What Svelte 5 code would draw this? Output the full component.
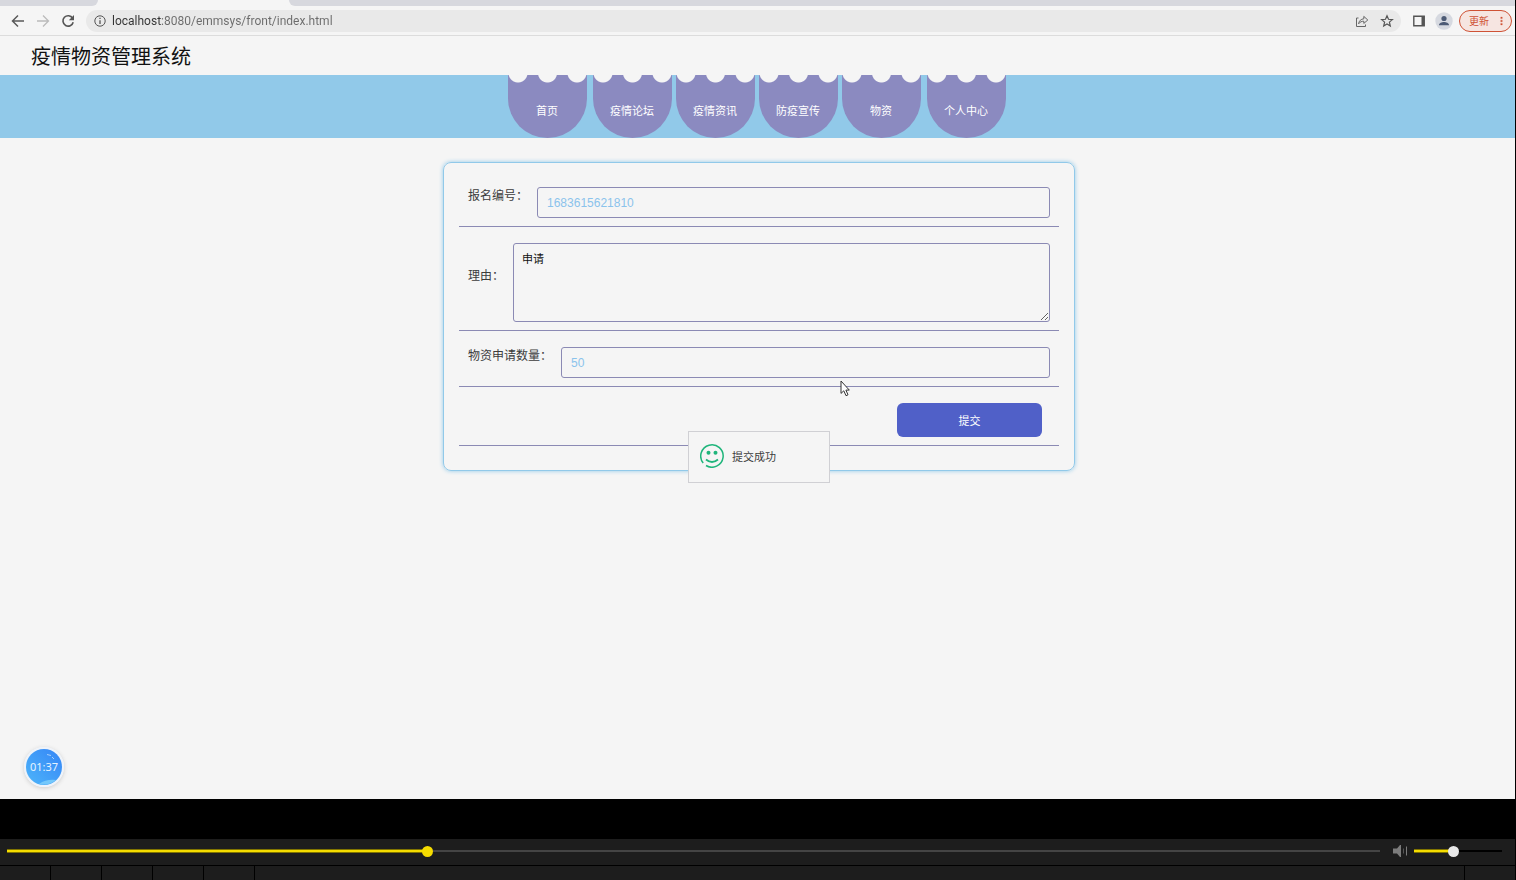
<!-- App.svelte -->
<script>
    const navItems = ['首页', '疫情论坛', '疫情资讯', '防疫宣传', '物资', '个人中心'];
    const cells = [1, 2, 3, 4, 5];

    let url = $state('localhost:8080/emmsys/front/index.html');
    let applyNo = $state('1683615621810');
    let reason = $state('申请');
    let amount = $state('50');
    let submitted = $state(true);
    let progress = $state(305);
    let volume = $state(44);

    function submit(e) {
        e.preventDefault();
        submitted = true;
    }
</script>

<div class="screen">
    <div class="tabs"><div class="tab"></div><div class="tab active"></div><div class="tab rest"></div></div>
    <div class="toolbar">
        <div class="history">
            <button aria-label="后退">
                <svg width="14" height="14" viewBox="0 0 14 14"><path d="M13 7H2M7 1.5L1.5 7L7 12.5" fill="none" stroke="#5a5a5a" stroke-width="1.5" /></svg>
            </button>
            <button aria-label="前进">
                <svg width="14" height="14" viewBox="0 0 14 14"><path d="M1 7h11M7 1.5L12.5 7L7 12.5" fill="none" stroke="#bbb" stroke-width="1.3" /></svg>
            </button>
            <button aria-label="刷新">
                <svg width="14" height="14" viewBox="0 0 14 14"><path d="M11.6 4.2A5.2 5.2 0 1 0 12.2 8.2" fill="none" stroke="#555" stroke-width="1.6" /><path d="M13 1v5.2H7.8z" fill="#555" /></svg>
            </button>
        </div>
        <div class="address">
            <svg width="12" height="12" viewBox="0 0 12 12"><circle cx="6" cy="6" r="5.2" fill="none" stroke="#555" /><path d="M6 5.2V9M6 2.8V4.1" stroke="#555" stroke-width="1.3" /></svg>
            <input type="text" aria-label="地址" bind:value={url} />
            <button aria-label="分享">
                <svg width="14" height="14" viewBox="0 0 14 14"><path d="M3.5 4H1.5V12.5H10.5V10.5M3.6 9.8C4 6.8 6 5 8.8 4.8V2.4L12.8 6L8.8 9.4V7.2C6.6 7.2 5 8 3.6 9.8Z" fill="none" stroke="#666" stroke-linejoin="round" /></svg>
            </button>
            <button aria-label="收藏">
                <svg width="14" height="14" viewBox="0 0 14 14"><path d="M7 1.7L8.5 5.3L12.4 5.6L9.4 8.1L10.3 11.9L7 9.9L3.7 11.9L4.6 8.1L1.6 5.6L5.5 5.3Z" fill="none" stroke="#555" stroke-width="1.2" /></svg>
            </button>
        </div>
        <button class="panel" aria-label="侧边栏">
            <svg width="12" height="12" viewBox="0 0 12 12"><path d="M.8 1.2h10.4v9.6H.8z" fill="none" stroke="#555" stroke-width="1.4" /><path d="M8.5 1h3v10h-3z" fill="#555" /></svg>
        </button>
        <button class="profile" aria-label="用户">
            <svg width="18" height="18" viewBox="0 0 18 18"><circle cx="9" cy="9" r="8.7" fill="#d6d9e0" /><circle cx="9" cy="6.5" r="2.6" fill="#4d5b75" /><path d="M4 13.2C4 10.8 6.8 10 9 10S14 10.8 14 13.2z" fill="#4d5b75" /></svg>
        </button>
        <button class="update">
            更新
            <svg width="4" height="12" viewBox="0 0 4 12"><path d="M1 .8h2v2H1zM1 5h2v2H1zM1 9.2h2v2H1z" fill="#cf5235" stroke="#cf5235" stroke-width=".4" /></svg>
        </button>
    </div>

    <header>
        <h1>疫情物资管理系统</h1>
    </header>
    <nav>
        {#each navItems as item}
            <a href="#top">{item}</a>
        {/each}
    </nav>

    <main>
        <form onsubmit={submit}>
            <div class="row">
                <label for="applyNo">报名编号：</label>
                <input id="applyNo" type="text" bind:value={applyNo} />
            </div>
            <div class="row">
                <label for="reason">理由：</label>
                <textarea id="reason" bind:value={reason}></textarea>
            </div>
            <div class="row">
                <label for="amount">物资申请数量：</label>
                <input id="amount" type="text" bind:value={amount} />
            </div>
            <div class="row actions">
                <button class="submit" type="submit">提交</button>
            </div>

            {#if submitted}
                <div class="toast" role="status">
                    <svg width="24" height="24" viewBox="0 0 24 24">
                        <path d="M3.2 19A11.2 11.2 0 1 1 6 21.5" fill="none" stroke="#1fb57b" stroke-width="1.5" />
                        <circle cx="8.5" cy="8.8" r="2" fill="#1fb57b" />
                        <circle cx="15.5" cy="8.8" r="2" fill="#1fb57b" />
                        <path d="M6 15.5Q12 20.5 18 15.5" fill="none" stroke="#1fb57b" stroke-width="1.8" />
                    </svg>
                    提交成功
                </div>
            {/if}
            <svg class="cursor" width="10" height="17" viewBox="0 0 10 17"><path d="M1 1V13.4L3.8 10.8L6 15.7L8 14.8L5.9 10.1H9.3Z" fill="#fff" stroke="#333" /></svg>
        </form>
        <div class="timer">
            <svg width="36" height="36" viewBox="0 0 36 36">
                <defs>
                    <linearGradient id="ball" x1="0" y1="1" x2="1" y2="0">
                        <stop offset="0" stop-color="#4db5fa" />
                        <stop offset="1" stop-color="#3585f6" />
                    </linearGradient>
                </defs>
                <circle cx="18" cy="18" r="18" fill="url(#ball)" />
                <path d="M13 35Q20 30 30 31Q23 37 13 35Z" fill="#74c8fb" />
                <path d="M21 5.5L25 6.5M26 8L28 10" stroke="#a6cffb" stroke-width="1" />
            </svg>
            <span>01:37</span>
        </div>
    </main>

    <div class="letterbox"></div>
    <div class="controls">
        <input class="seek" type="range" min="0" max="1000" aria-label="进度" bind:value={progress} style="--fill: {progress / 10}%" />
        <button aria-label="静音">
            <svg width="16" height="14" viewBox="0 0 16 14"><path d="M1 4.5H5L8 1H9V13H8L5 9.5H1Z" fill="#7c7c7c" /><path d="M11.5 4.5V9.5" stroke="#555" /><path d="M14.5 2.5V11.5" stroke="#7c7c7c" /></svg>
        </button>
        <input class="volume" type="range" min="0" max="100" aria-label="音量" bind:value={volume} style="--fill: {volume}%" />
    </div>
    <div class="strip">
        {#each cells as cell}
            <div class="cell"></div>
        {/each}
        <div class="cell last"></div>
    </div>
</div>

<style>
    :global(body) {
        margin: 0;
        background: #000;
    }

    .screen {
        display: flex;
        flex-direction: column;
        box-sizing: border-box;
        min-height: 100vh;
        border-right: 1px solid #000;
        background: #f5f5f5;
        color: #3c3c3c;
        font-family: "Liberation Sans", "Noto Sans CJK SC", sans-serif;
        font-size: 12px;
    }

    button {
        padding: 0;
        border: 0;
        background: none;
        font-family: inherit;
    }

    svg {
        display: block;
    }

    /* browser chrome */
    .tabs {
        display: flex;
        height: 6px;
        background: #f5f5f5;
    }

    .tab {
        width: 98px;
        background: #d7d8de;
        border-bottom-right-radius: 6px;
    }

    .tab.active {
        width: 191px;
        background: #f5f5f5;
    }

    .tab.rest {
        flex: 1;
        border-radius: 0 0 0 6px;
    }

    .toolbar {
        display: flex;
        align-items: center;
        height: 29px;
        padding: 0 3px 0 11px;
        border-bottom: 1px solid #dcdcdc;
    }

    .history {
        display: flex;
        gap: 11px;
        margin-right: 11px;
    }

    .address {
        display: flex;
        flex: 1;
        align-items: center;
        gap: 11px;
        height: 22px;
        margin-right: 12px;
        padding: 0 7px 0 8px;
        border-radius: 11px;
        background: #e9e9e9;
    }

    .address input {
        flex: 1;
        min-width: 0;
        margin-left: -5px;
        padding: 0;
        border: 0;
        outline: none;
        background: linear-gradient(90deg, #333 49px, #6b6b6b 49px) text;
        color: transparent;
        font-family: Roboto, sans-serif;
        font-size: 12px;
        line-height: 20px;
    }

    .profile {
        margin: 0 6px 0 10px;
    }

    .update {
        display: flex;
        align-items: center;
        gap: 11px;
        box-sizing: border-box;
        width: 53px;
        height: 22px;
        padding: 0 8px 0 9px;
        border: 1px solid #cf5235;
        border-radius: 11px;
        background: #f6e5e1;
        color: #cf5235;
        font-size: 10px;
        white-space: nowrap;
    }

    /* site */
    header {
        display: flex;
        align-items: center;
        box-sizing: border-box;
        height: 39px;
        padding: 2px 31px 0;
    }

    h1 {
        margin: 0;
        color: #111;
        font-size: 20px;
        font-weight: 400;
        line-height: 30px;
    }

    nav {
        display: flex;
        justify-content: center;
        gap: 4px;
        padding-right: 2px;
        background: #91c9e9;
    }

    nav a {
        width: 79px;
        height: 63px;
        padding-top: 5px;
        box-sizing: border-box;
        border-radius: 0 0 40px 40px;
        background:
            radial-gradient(circle at 10px -2px, #f5f5f5 9px, transparent 10px),
            radial-gradient(circle at 50% -2px, #f5f5f5 9px, transparent 10px),
            radial-gradient(circle at 69px -2px, #f5f5f5 9px, transparent 10px),
            #8b8ac0;
        color: #fff;
        font-size: 11px;
        line-height: 63px;
        text-align: center;
        text-decoration: none;
    }

    nav a:first-child {
        margin-right: 2px;
    }

    nav a:last-child {
        margin-left: 2px;
    }

    main {
        position: relative;
        flex: 1;
        padding: 24px 16px 24px 19px;
    }

    form {
        position: relative;
        box-sizing: border-box;
        max-width: 632px;
        margin: 0 auto;
        padding: 8px 15px 24px;
        border: 1px solid #91c9e9;
        border-radius: 8px;
        box-shadow: 0 0 4px #91c9e9;
    }

    .row {
        display: flex;
        align-items: center;
        padding: 16px 9px 8px;
        border-bottom: 1px solid #8b8ab4;
    }

    label {
        padding: 0 9px 13px 0;
        line-height: 18px;
    }

    .row input,
    textarea {
        flex: 1;
        box-sizing: border-box;
        min-width: 0;
        height: 31px;
        padding: 0 9px;
        border: 1px solid #8b8ab4;
        border-radius: 3px;
        outline: none;
        background: transparent;
        color: #8bc3ec;
        font-family: inherit;
        font-size: 12px;
    }

    .row textarea {
        height: 79px;
        padding: 7px 8px;
        color: #111;
        font-size: 11px;
        line-height: 16px;
    }

    .actions {
        justify-content: flex-end;
        padding-right: 17px;
    }

    .submit {
        width: 145px;
        height: 34px;
        border-radius: 6px;
        background: #5060c8;
        color: #fff;
        font-size: 11px;
    }

    .toast {
        position: absolute;
        bottom: -13px;
        left: 50%;
        display: flex;
        align-items: center;
        gap: 8px;
        box-sizing: border-box;
        width: 142px;
        height: 52px;
        padding: 0 11px 2px;
        border: 1px solid #d0d0d4;
        background: #f5f5f5;
        font-size: 11px;
        transform: translateX(-50%);
    }

    .cursor {
        position: absolute;
        top: 217px;
        left: 396px;
    }

    .timer {
        position: absolute;
        bottom: 12px;
        left: 24px;
        border: 2px solid #eef3fa;
        border-radius: 50%;
        box-shadow: 0 1px 4px #ccc;
    }

    .timer span {
        position: absolute;
        inset: 0;
        color: #e6f3ff;
        font-family: "Noto Sans", sans-serif;
        font-size: 11px;
        line-height: 36px;
        text-align: center;
    }

    /* video player */
    .letterbox {
        height: 40px;
        background: #000;
    }

    .controls {
        display: flex;
        align-items: center;
        height: 24px;
        padding: 0 13px 2px 7px;
        border-bottom: 1px solid #000;
        background: #1d1d1d;
    }

    .controls button {
        margin: 0 6px 0 12px;
    }

    .controls input {
        --rail: #444;
        --thumb: #f5dc00;
        height: 12px;
        margin: 0;
        appearance: none;
        background:
            linear-gradient(#f5dc00, #f5dc00) 0 50% / var(--fill) 2px no-repeat,
            linear-gradient(#807300, #807300) 0 50% / var(--fill) 4px no-repeat,
            linear-gradient(var(--rail), var(--rail)) 0 50% / 100% 2px no-repeat;
    }

    .controls input::-webkit-slider-thumb {
        width: 11px;
        height: 11px;
        border-radius: 50%;
        appearance: none;
        background: var(--thumb);
    }

    .controls .seek {
        flex: 1;
        min-width: 0;
    }

    .controls .volume {
        --rail: #000;
        --thumb: #e8e8e8;
        width: 88px;
    }

    .strip {
        display: flex;
        height: 14px;
        background: #1d1d1d;
    }

    .cell {
        width: 50px;
        border-right: 1px solid #000;
    }

    .cell.last {
        margin-left: auto;
        border-right: 0;
        border-left: 1px solid #000;
    }
</style>
